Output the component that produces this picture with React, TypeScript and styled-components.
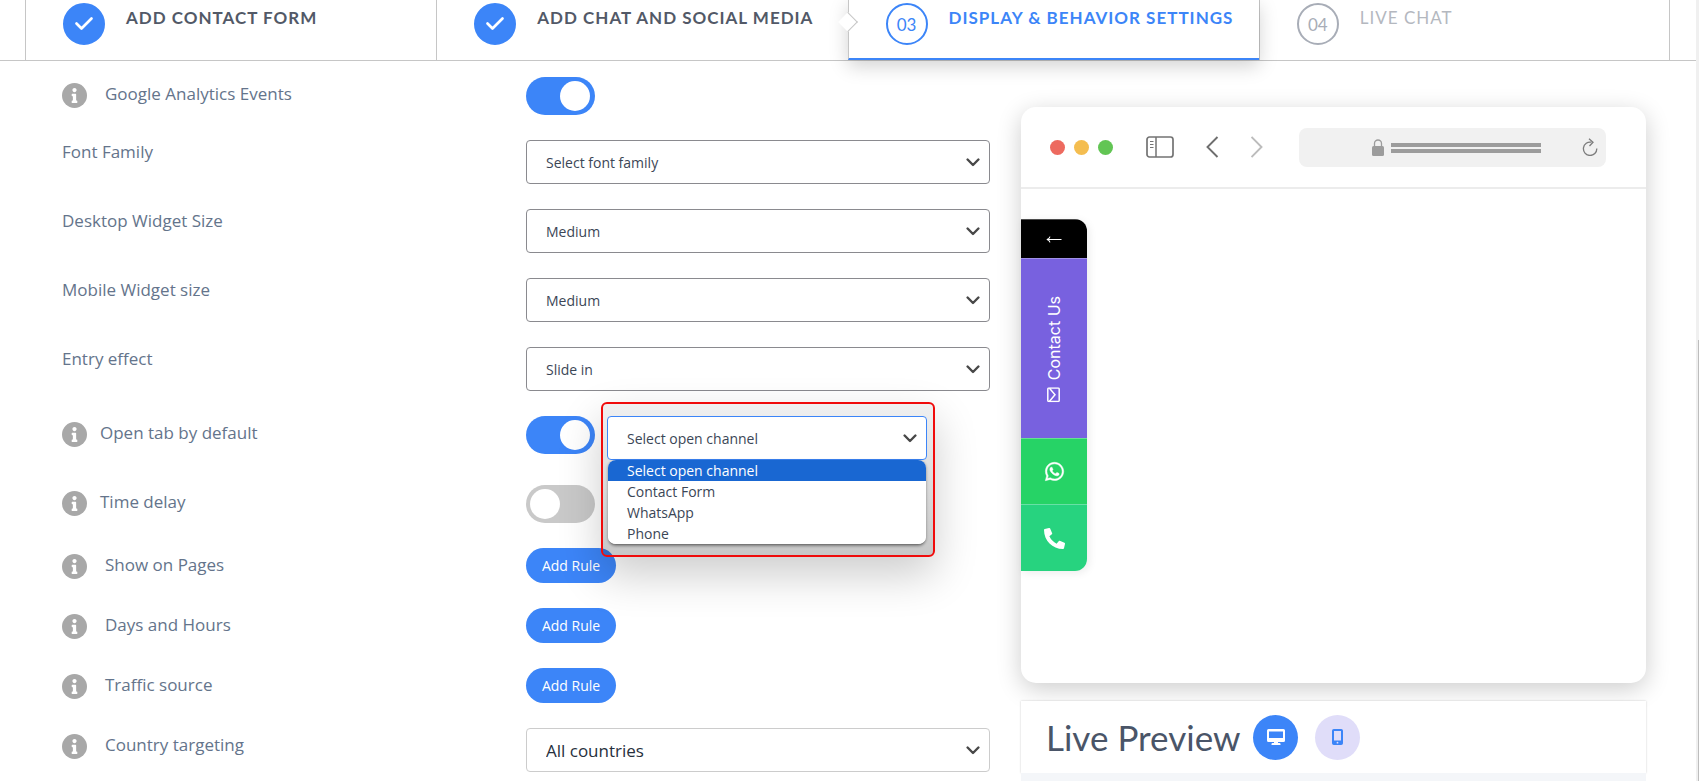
import React, { useState } from "react";
import styled, { createGlobalStyle, css } from "styled-components";
import { FaInfo, FaWhatsapp, FaPhoneAlt } from "react-icons/fa";

const blue = "#3c85f8";
const line = "#c6c6c6";

const GlobalStyle = createGlobalStyle`
  *, *::before, *::after { box-sizing: border-box; }
  body {
    margin: 0;
    background: #fff;
    color: #334155;
    font-family: "Open Sans", "Noto Sans", sans-serif;
  }
  button, select, input { font: inherit; }
`;

const Page = styled.div`
  display: flex;
  min-height: 100vh;
`;

const Main = styled.main`
  flex: 1;
  min-width: 0;
  display: flex;
  flex-direction: column;
`;

const ScrollTrack = styled.div`
  width: 3px;
  padding: 340px 0 0 2px;
  background: #f0f0f0;
  display: flex;
`;

const ScrollThumb = styled.div`
  flex: 1;
  background: #bdbdbd;
`;

/* Wizard steps */

const Steps = styled.ol`
  list-style: none;
  margin: 0;
  padding: 0 26px 0 25px;
  display: grid;
  grid-template-columns: repeat(4, 1fr);
  height: 61px;
  border-bottom: 1px solid ${line};
  font-family: Lato, sans-serif;
`;

const Step = styled.li<{ $active?: boolean }>`
  position: relative;
  border-left: 1px solid ${line};
  &:last-child {
    border-right: 1px solid ${line};
  }
  ${(p) =>
    p.$active &&
    css`
      z-index: 1;
      background: #fff;
      box-shadow: 0 6px 18px rgba(0, 0, 0, 0.18);
      clip-path: inset(0 -40px -40px -40px);
      border-bottom: 2px solid ${blue};
      &::before {
        content: "";
        position: absolute;
        left: -8px;
        top: 15px;
        width: 14px;
        height: 14px;
        background: #fff;
        border: solid ${line};
        border-width: 1px 1px 0 0;
        transform: rotate(45deg);
      }
    `}
`;

const StepLink = styled.a`
  display: flex;
  align-items: flex-start;
  gap: 21px;
  padding: 3px 12px 0 37px;
  color: inherit;
  text-decoration: none;
`;

type StepState = "done" | "current" | "todo";

const StepMark = styled.span<{ $state: StepState }>`
  flex: none;
  display: flex;
  align-items: center;
  justify-content: center;
  width: 42px;
  height: 42px;
  border-radius: 50%;
  border: 2px solid ${(p) => (p.$state === "todo" ? "#a8adb7" : blue)};
  background: ${(p) => (p.$state === "done" ? blue : "#fff")};
  color: ${(p) => (p.$state === "done" ? "#fff" : p.$state === "current" ? blue : "#a8adb7")};
  font-size: 17px;
`;

const StepTitle = styled.span<{ $state: StepState }>`
  padding-top: 5px;
  font-size: 17px;
  line-height: 20px;
  letter-spacing: 1px;
  white-space: nowrap;
  text-transform: uppercase;
  font-weight: ${(p) => (p.$state === "todo" ? 400 : 700)};
  color: ${(p) => (p.$state === "done" ? "#525967" : p.$state === "current" ? blue : "#b4b8bf")};
`;

/* Settings form */

const Content = styled.div`
  flex: 1;
  display: grid;
  grid-template-columns: minmax(0, 928fr) minmax(0, 625fr);
  column-gap: 31px;
  padding: 0 50px 0 62px;
`;

const Form = styled.form`
  display: flex;
  flex-direction: column;
  gap: 25px;
  padding: 16px 0 9px;
`;

const Row = styled.div`
  display: grid;
  grid-template-columns: 1fr 1fr;
  align-items: start;
`;

const LabelCell = styled.div<{ $gap?: number }>`
  display: flex;
  align-items: center;
  gap: ${(p) => p.$gap ?? 0}px;
  min-height: ${(p) => (p.$gap ? 36 : 24)}px;
  font-size: 17px;
  line-height: 24px;
  color: #64748b;
  button + * {
    padding-bottom: 2px;
  }
`;

const InfoButton = styled.button`
  display: flex;
  align-items: center;
  justify-content: center;
  width: 25px;
  height: 25px;
  padding: 0;
  border: 0;
  border-radius: 50%;
  background: #a8a8a8;
  color: #fff;
`;

const Controls = styled.div`
  display: flex;
  gap: 12px;
  align-items: flex-start;
`;

const Toggle = styled.input`
  appearance: none;
  flex: none;
  width: 69px;
  height: 38px;
  margin: 0;
  padding: 4px 5px 4px 4px;
  border-radius: 19px;
  background: #c9c9c9;
  display: flex;
  cursor: pointer;
  &::before {
    content: "";
    width: 30px;
    height: 30px;
    border-radius: 50%;
    background: #fff;
  }
  &:checked {
    background: ${blue};
    justify-content: flex-end;
  }
`;

type SelectTone = "dark" | "light" | "focus";
const toneColour = { dark: "#8a8a8f", light: "#cccccc", focus: blue };

const SelectBox = styled.div<{ $narrow?: boolean }>`
  position: relative;
  width: ${(p) => (p.$narrow ? "320px" : "100%")};
  z-index: ${(p) => (p.$narrow ? 2 : "auto")};
`;

const Select = styled.select<{ $tone: SelectTone; $large?: boolean }>`
  appearance: none;
  position: relative;
  display: block;
  width: 100%;
  height: 44px;
  padding: 0 44px 0 19px;
  border: 1px solid ${(p) => toneColour[p.$tone]};
  border-radius: 4px;
  background: #fff;
  color: ${(p) => (p.$large ? "#27303d" : "#3b4656")};
  font-size: ${(p) => (p.$large ? 17 : 14)}px;
  outline: none;
`;

const Caret = styled.svg`
  position: absolute;
  right: 10px;
  top: 18px;
  width: 14px;
  height: 9px;
  pointer-events: none;
`;

const Highlight = styled.div`
  position: absolute;
  inset: -14px -8px -97px -6px;
  border: 2px solid #f00b0b;
  border-radius: 6px;
  background: linear-gradient(rgba(0, 0, 0, 0.06), rgba(0, 0, 0, 0.12) 40%, rgba(0, 0, 0, 0.22));
  box-shadow: 0 18px 44px rgba(0, 0, 0, 0.2);
  pointer-events: none;
`;

const Menu = styled.ul`
  list-style: none;
  position: absolute;
  top: 44px;
  left: 1px;
  right: 1px;
  margin: 0;
  padding: 0;
  overflow: hidden;
  border-radius: 8px;
  border-bottom: 1px solid #777;
  background: #fff;
  box-shadow: 0 1px 3px rgba(0, 0, 0, 0.4);
`;

const MenuItem = styled.li<{ $selected?: boolean }>`
  padding: 0 19px;
  font-size: 14px;
  line-height: 21px;
  background: ${(p) => (p.$selected ? "#1967d2" : "#fff")};
  color: ${(p) => (p.$selected ? "#fff" : "#3b4656")};
`;

const RuleButton = styled.button`
  width: 90px;
  height: 35px;
  padding: 0;
  border: 0;
  border-radius: 18px;
  background: ${blue};
  color: #fff;
  font-size: 14px;
`;

/* Keeps rule rows at the height of their button */
const RuleLine = styled(Row)`
  height: 35px;
`;

/* Live preview */

const Preview = styled.section`
  display: flex;
  flex-direction: column;
  padding-top: 46px;
`;

const Browser = styled.div`
  min-height: 576px;
  border-radius: 15px;
  background: #fff;
  box-shadow: 0 6px 24px rgba(0, 0, 0, 0.2);
`;

const Chrome = styled.div`
  display: flex;
  align-items: center;
  height: 82px;
  padding: 0 40px 0 29px;
  border-bottom: 2px solid #ececec;
`;

const Dots = styled.div`
  display: flex;
  gap: 9px;
  margin-right: 33px;
`;

const Dot = styled.span<{ $fill: string }>`
  width: 15px;
  height: 15px;
  border-radius: 50%;
  background: ${(p) => p.$fill};
`;

const NavIcons = styled.div`
  display: flex;
  align-items: center;
  gap: 32px;
  margin-right: 36px;
  svg {
    display: block;
  }
`;

const AddressBar = styled.div`
  flex: 1;
  display: flex;
  align-items: center;
  justify-content: flex-end;
  height: 39px;
  padding: 0 8px;
  border-radius: 8px;
  background: #f1f1f1;
  svg {
    display: block;
  }
`;

const AddressLines = styled.div`
  display: flex;
  flex-direction: column;
  gap: 2px;
  width: 150px;
  margin: 2px 41px 0 7px;
`;

const AddressLine = styled.span`
  height: 4px;
  background: #9c9c9c;
`;

const Widget = styled.div`
  width: 66px;
  margin-top: 30px;
  overflow: hidden;
  border-radius: 0 12px 12px 0;
  box-shadow: 2px 2px 8px rgba(0, 0, 0, 0.08);
`;

const WidgetTab = styled.button<{ $fill: string; $height: number }>`
  display: flex;
  align-items: center;
  justify-content: center;
  width: 100%;
  height: ${(p) => p.$height}px;
  padding: 0;
  border: 0;
  border-top: 1px solid rgba(255, 255, 255, 0.3);
  background: ${(p) => p.$fill};
  color: #fff;
  font-size: 16px;
`;

const ContactLabel = styled.span`
  display: flex;
  align-items: center;
  gap: 8px;
  writing-mode: vertical-rl;
  transform: rotate(180deg);
  font-family: Inter, sans-serif;
  font-size: 16px;
  line-height: 20px;
  svg {
    display: block;
    transform: rotate(90deg);
  }
`;

const PreviewBar = styled.div`
  display: flex;
  align-items: center;
  height: 72px;
  margin-top: 18px;
  padding-left: 25px;
  background: #fff;
  box-shadow: 0 0 2px rgba(0, 0, 0, 0.2);
`;

const PreviewTitle = styled.h2`
  margin: 0 13px 0 0;
  font-family: Lato, sans-serif;
  font-weight: 400;
  font-size: 35px;
  line-height: 40px;
  color: #4a5568;
  white-space: nowrap;
`;

const DeviceButton = styled.button<{ $on?: boolean }>`
  display: flex;
  align-items: center;
  justify-content: center;
  width: 45px;
  height: 45px;
  margin-right: 17px;
  padding: 0;
  border: 0;
  border-radius: 50%;
  background: ${(p) => (p.$on ? blue : "#e0ddf9")};
`;

const PreviewFoot = styled.div`
  flex: 1;
  background: #f4f6f9;
`;

const steps: { title: string; state: StepState; mark: string }[] = [
  { title: "Add contact form", state: "done", mark: "01" },
  { title: "Add chat and social media", state: "done", mark: "02" },
  { title: "Display & behavior settings", state: "current", mark: "03" },
  { title: "Live chat", state: "todo", mark: "04" },
];

const channels = ["Select open channel", "Contact Form", "WhatsApp", "Phone"];

function Info({ topic }: { topic: string }) {
  return (
    <InfoButton type="button" aria-label={`About ${topic}`}>
      <FaInfo size={15} />
    </InfoButton>
  );
}

function Dropdown(props: {
  id: string;
  options: string[];
  tone?: SelectTone;
  large?: boolean;
  label?: string;
}) {
  return (
    <>
      <Select id={props.id} aria-label={props.label} $tone={props.tone ?? "dark"} $large={props.large}>
        {props.options.map((o) => (
          <option key={o}>{o}</option>
        ))}
      </Select>
      <Caret viewBox="0 0 14 9" fill="none" stroke="#484848" strokeWidth="2.4" strokeLinecap="round" strokeLinejoin="round">
        <path d="M1.6 1.5 7 7l5.400-5.500" />
      </Caret>
    </>
  );
}

function SelectRow(props: { id: string; label: string; options: string[] }) {
  return (
    <Row>
      <LabelCell>
        <label htmlFor={props.id}>{props.label}</label>
      </LabelCell>
      <SelectBox>
        <Dropdown id={props.id} options={props.options} />
      </SelectBox>
    </Row>
  );
}

function RuleRow({ label }: { label: string }) {
  return (
    <RuleLine>
      <LabelCell $gap={18}>
        <Info topic={label} />
        <span>{label}</span>
      </LabelCell>
      <Controls>
        <RuleButton type="button">Add Rule</RuleButton>
      </Controls>
    </RuleLine>
  );
}

export default function App() {
  const [analytics, setAnalytics] = useState(true);
  const [openTab, setOpenTab] = useState(true);
  const [delay, setDelay] = useState(false);

  return (
    <>
      <GlobalStyle />
      <Page>
        <Main>
          <Steps>
            {steps.map((s) => (
              <Step key={s.mark} $active={s.state === "current"}>
                <StepLink href="#">
                  <StepMark $state={s.state}>
                    {s.state === "done" ? (
                      <svg width="20" height="16" viewBox="0 0 20 16" fill="none" stroke="#fff" strokeWidth="2.700" strokeLinecap="round" strokeLinejoin="round">
                        <path d="M2.500 7.500 7.500 12.500 17.500 2.500" />
                      </svg>
                    ) : (
                      s.mark
                    )}
                  </StepMark>
                  <StepTitle $state={s.state}>{s.title}</StepTitle>
                </StepLink>
              </Step>
            ))}
          </Steps>

          <Content>
            <Form>
              <Row>
                <LabelCell $gap={18}>
                  <Info topic="Google Analytics Events" />
                  <label htmlFor="analytics">Google Analytics Events</label>
                </LabelCell>
                <Toggle id="analytics" type="checkbox" checked={analytics} onChange={(e) => setAnalytics(e.target.checked)} />
              </Row>
              <SelectRow id="font" label="Font Family" options={["Select font family"]} />
              <SelectRow id="desktop" label="Desktop Widget Size" options={["Medium", "Small", "Large"]} />
              <SelectRow id="mobile" label="Mobile Widget size" options={["Medium", "Small", "Large"]} />
              <SelectRow id="effect" label="Entry effect" options={["Slide in", "None"]} />
              <Row>
                <LabelCell $gap={13}>
                  <Info topic="Open tab by default" />
                  <label htmlFor="opentab">Open tab by default</label>
                </LabelCell>
                <Controls>
                  <Toggle id="opentab" type="checkbox" checked={openTab} onChange={(e) => setOpenTab(e.target.checked)} />
                  <SelectBox $narrow>
                    <Highlight />
                    <Dropdown id="channel" label="Open channel" options={channels} tone="focus" />
                    <Menu role="listbox" aria-label="Open channel">
                      {channels.map((c, i) => (
                        <MenuItem key={c} role="option" aria-selected={i === 0} $selected={i === 0}>
                          {c}
                        </MenuItem>
                      ))}
                    </Menu>
                  </SelectBox>
                </Controls>
              </Row>
              <Row>
                <LabelCell $gap={13}>
                  <Info topic="Time delay" />
                  <label htmlFor="delay">Time delay</label>
                </LabelCell>
                <Toggle id="delay" type="checkbox" checked={delay} onChange={(e) => setDelay(e.target.checked)} />
              </Row>
              <RuleRow label="Show on Pages" />
              <RuleRow label="Days and Hours" />
              <RuleRow label="Traffic source" />
              <Row>
                <LabelCell $gap={18}>
                  <Info topic="Country targeting" />
                  <label htmlFor="country">Country targeting</label>
                </LabelCell>
                <SelectBox>
                  <Dropdown id="country" options={["All countries"]} tone="light" large />
                </SelectBox>
              </Row>
            </Form>

            <Preview>
              <Browser>
                <Chrome>
                  <Dots>
                    <Dot $fill="#ed6a5f" />
                    <Dot $fill="#f4bd50" />
                    <Dot $fill="#62c554" />
                  </Dots>
                  <NavIcons>
                    <svg width="28" height="22" viewBox="0 0 28 22" fill="none" stroke="#737373">
                      <rect x="1" y="1" width="26" height="20" rx="2.500" strokeWidth="1.700" />
                      <path d="M10 1v20" strokeWidth="1.500" />
                      <path d="M4 5.500h3.500M4 8.500h3.500M4 11.500h3.500" strokeWidth="1.200" />
                    </svg>
                    <svg width="13" height="22" viewBox="0 0 13 22" fill="none" stroke="#6e6e6e" strokeWidth="1.900">
                      <path d="M11.500 1 1.500 11l10 10" />
                    </svg>
                    <svg width="12" height="22" viewBox="0 0 12 22" fill="none" stroke="#bcbcbc" strokeWidth="1.900">
                      <path d="M.5 1l10 10-10 10" />
                    </svg>
                  </NavIcons>
                  <AddressBar>
                    <svg width="12" height="17" viewBox="0 0 12 17">
                      <rect y="7" width="12" height="10" rx="1.500" fill="#9c9c9c" />
                      <path d="M2.500 7.500V4.500a3.500 3.500 0 0 1 7 0v3" fill="none" stroke="#9c9c9c" strokeWidth="1.300" />
                    </svg>
                    <AddressLines>
                      <AddressLine />
                      <AddressLine />
                    </AddressLines>
                    <svg width="16" height="18" viewBox="0 0 16 18" fill="none" stroke="#7c7c7c" strokeWidth="1.300">
                      <path d="M9.500 4.200A6.700 6.700 0 1 0 14.800 10.500" />
                      <path d="M7 .8 11 4.300 7.500 8" />
                    </svg>
                  </AddressBar>
                </Chrome>
                <Widget>
                  <WidgetTab type="button" aria-label="Back" $fill="#000" $height={39}>
                    <svg width="16" height="7" viewBox="0 0 16 7" fill="none" stroke="#fff" strokeWidth="1.100">
                      <path d="M15.500 3.500H1.500" />
                      <path d="M4 .7C3.500 2.300 2.500 3.200.8 3.500 2.500 3.800 3.500 4.700 4 6.300" />
                    </svg>
                  </WidgetTab>
                  <WidgetTab type="button" $fill="#7861df" $height={180}>
                    <ContactLabel>
                      <svg width="15" height="13" viewBox="0 0 15 13" fill="none" stroke="#fff" strokeWidth="1.500">
                        <rect x=".8" y=".8" width="13.400" height="11.400" rx="1" />
                        <path d="M1 2.500 7.500 8 14 2.500" />
                      </svg>
                      Contact Us
                    </ContactLabel>
                  </WidgetTab>
                  <WidgetTab type="button" aria-label="WhatsApp" $fill="#26d366" $height={66}>
                    <FaWhatsapp size={21} stroke="#fff" strokeWidth={12} />
                  </WidgetTab>
                  <WidgetTab type="button" aria-label="Phone" $fill="#27d37f" $height={67}>
                    <FaPhoneAlt size={21} />
                  </WidgetTab>
                </Widget>
              </Browser>
              <PreviewBar>
                <PreviewTitle>Live Preview</PreviewTitle>
                <DeviceButton type="button" aria-label="Desktop" $on>
                  <svg width="18" height="16" viewBox="0 0 18 16">
                    <path
                      fill="#fff"
                      fillRule="evenodd"
                      d="M1.500 0h15A1.500 1.500 0 0 1 18 1.500v10a1.500 1.500 0 0 1-1.500 1.500H11v1h1.500a1 1 0 0 1 1 1v1h-9v-1a1 1 0 0 1 1-1H7v-1H1.500A1.500 1.500 0 0 1 0 11.500v-10A1.500 1.500 0 0 1 1.500 0ZM2 2.500V9h14V2.500Z"
                    />
                  </svg>
                </DeviceButton>
                <DeviceButton type="button" aria-label="Mobile">
                  <svg width="11" height="16" viewBox="0 0 11 16">
                    <path
                      fill={blue}
                      fillRule="evenodd"
                      d="M1.800 0h7.400A1.800 1.800 0 0 1 11 1.800v12.400A1.800 1.800 0 0 1 9.200 16H1.800A1.800 1.800 0 0 1 0 14.200V1.800A1.800 1.800 0 0 1 1.800 0ZM2 2v9.500h7V2Z"
                    />
                    <circle cx="5.500" cy="13.700" r=".9" fill="#e0ddf9" />
                  </svg>
                </DeviceButton>
              </PreviewBar>
              <PreviewFoot />
            </Preview>
          </Content>
        </Main>
        <ScrollTrack>
          <ScrollThumb />
        </ScrollTrack>
      </Page>
    </>
  );
}
